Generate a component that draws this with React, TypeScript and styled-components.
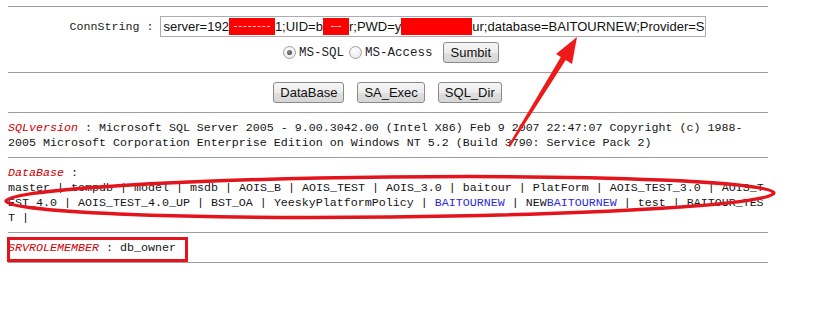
import React from "react";
import styled, { createGlobalStyle } from "styled-components";

const Global = createGlobalStyle`
  html, body { margin: 0; padding: 0; background: #ffffff; }
  body { font-family: "Liberation Mono", "Courier New", monospace; color: #111; }
`;

const Page = styled.div`
  position: relative;
  width: 819px;
  height: 310px;
  box-sizing: border-box;
  padding: 6px 0 0 8px;
  overflow: hidden;
`;

const Panel = styled.div`
  width: 760px;
  display: flex;
  flex-direction: column;
`;

const Rule = styled.div`
  height: 0;
  border-top: 1px solid #9d9d9d;
`;

const ConnSection = styled.div`
  display: flex;
  flex-direction: column;
  align-items: center;
  gap: 5px;
  padding: 9px 0 9px;
`;

const Row = styled.div<{ $shift?: number }>`
  display: flex;
  align-items: center;
  justify-content: center;
  height: 21px;
  margin-left: ${(p) => p.$shift ?? 0}px;
`;

const Mono = styled.span`
  font-family: "Liberation Mono", "Courier New", monospace;
  font-size: 11.67px;
  color: #222;
  white-space: pre;
`;

const FakeInput = styled.div`
  width: 546px;
  height: 21px;
  margin-left: 7px;
  box-sizing: border-box;
  border: 1px solid #abadb3;
  padding: 0 2px;
  font-family: "Liberation Sans", Arial, sans-serif;
  font-size: 13px;
  line-height: 19px;
  color: #111;
  white-space: nowrap;
  overflow: hidden;
`;

const Redact = styled.span<{ $w: number; $dash: number }>`
  position: relative;
  display: inline-block;
  width: ${(p) => p.$w}px;
  height: 17px;
  vertical-align: -4px;
  background: #fe0000;
  &::after {
    content: "";
    position: absolute;
    left: 50%;
    top: 8px;
    width: ${(p) => p.$dash}px;
    margin-left: -${(p) => p.$dash / 2}px;
    border-top: 1px dashed #ffd0d0;
  }
`;

const Radio = styled.span<{ $checked?: boolean }>`
  position: relative;
  display: inline-block;
  width: 13px;
  height: 13px;
  box-sizing: border-box;
  border-radius: 50%;
  border: 1px solid #a0a0a0;
  background: radial-gradient(circle at 40% 35%, #ffffff, #e2e2e2);
  margin-right: 3px;
  &::after {
    content: "";
    display: ${(p) => (p.$checked ? "block" : "none")};
    position: absolute;
    left: 3px;
    top: 3px;
    width: 5px;
    height: 5px;
    border-radius: 50%;
    background: radial-gradient(circle at 40% 35%, #8a8a8a, #3c3c3c);
  }
`;

const RadioLabel = styled(Mono)<{ $gap: number }>`
  font-size: 12.5px;
  margin-right: ${(p) => p.$gap}px;
`;

const Button = styled.button<{ $pad?: number }>`
  height: 21px;
  padding: 0 ${(p) => p.$pad ?? 6}px;
  box-sizing: border-box;
  border: 1px solid #8a8a8a;
  border-radius: 3px;
  background: linear-gradient(#f6f6f6, #ececec 50%, #dfdfdf 51%, #d6d6d6);
  font-family: "Liberation Sans", Arial, sans-serif;
  font-size: 13px;
  line-height: 19px;
  color: #111;
  cursor: default;
`;

const ButtonRow = styled.div`
  display: flex;
  justify-content: center;
  gap: 13px;
  padding: 9px 0 9px;
  margin-left: -1px;
`;

const Info = styled.div<{ $breakAll?: boolean }>`
  padding: 8px 0 6px;
  font-family: "Liberation Mono", "Courier New", monospace;
  font-size: 11.67px;
  line-height: 15px;
  color: #151515;
  word-break: ${(p) => (p.$breakAll ? "break-all" : "normal")};
`;

const Key = styled.span`
  color: #d00000;
  font-style: italic;
`;

const Hit = styled.span`
  color: #2b2bd6;
`;

const Overlay = styled.svg`
  position: absolute;
  left: 0;
  top: 0;
  pointer-events: none;
`;

const dbs = [
  "master",
  "tempdb",
  "model",
  "msdb",
  "AOIS_B",
  "AOIS_TEST",
  "AOIS_3.0",
  "baitour",
  "PlatForm",
  "AOIS_TEST_3.0",
  "AOIS_TEST_4.0",
  "AOIS_TEST_4.0_UP",
  "BST_OA",
  "YeeskyPlatformPolicy",
  "BAITOURNEW",
  "NEWBAITOURNEW",
  "test",
  "BAITOUR_TEST",
];

function renderDb(name: string) {
  const idx = name.indexOf("BAITOURNEW");
  if (idx < 0) return name;
  return (
    <>
      {name.slice(0, idx)}
      <Hit>BAITOURNEW</Hit>
      {name.slice(idx + 10)}
    </>
  );
}

export default function App() {
  return (
    <>
      <Global />
      <Page>
        <Panel>
          <Rule />
          <ConnSection>
            <Row>
              <Mono>ConnString :</Mono>
              <FakeInput>
                server=192
                <Redact $w={46} $dash={36} />
                1;UID=b
                <Redact $w={26} $dash={10} />
                r;PWD=y
                <Redact $w={71} $dash={0} />
                ur;database=BAITOURNEW;Provider=SQLOLEDB
              </FakeInput>
            </Row>
            <Row $shift={6}>
              <Radio $checked />
              <RadioLabel $gap={5}>MS-SQL</RadioLabel>
              <Radio />
              <RadioLabel $gap={10}>MS-Access</RadioLabel>
              <Button $pad={7}>Sumbit</Button>
            </Row>
          </ConnSection>
          <Rule />
          <ButtonRow>
            <Button>DataBase</Button>
            <Button>SA_Exec</Button>
            <Button>SQL_Dir</Button>
          </ButtonRow>
          <Rule />
          <Info>
            <Key>SQLversion</Key> : Microsoft SQL Server 2005 - 9.00.3042.00
            (Intel X86) Feb 9 2007 22:47:07 Copyright (c) 1988-
            <wbr />
            2005 Microsoft Corporation Enterprise Edition on Windows NT 5.2
            (Build 3790: Service Pack 2)
          </Info>
          <Rule />
          <Info $breakAll>
            <Key>DataBase</Key> :<br />
            {dbs.map((d, i) => (
              <React.Fragment key={i}>
                {renderDb(d)}
                {" | "}
              </React.Fragment>
            ))}
          </Info>
          <Rule />
          <Info>
            <Key>SRVROLEMEMBER</Key> : db_owner
          </Info>
          <Rule />
        </Panel>
        <Overlay width="819" height="310" viewBox="0 0 819 310">
          <ellipse
            cx="390"
            cy="197"
            rx="384"
            ry="20"
            transform="rotate(-0.6 390 197)"
            fill="none"
            stroke="#e3141c"
            strokeWidth="3.5"
          />
          <rect
            x="8.5"
            y="238.5"
            width="178"
            height="22"
            fill="none"
            stroke="#e3141c"
            strokeWidth="3"
          />
          <polygon points="508,146 510,147 567,58 562,55" fill="#ee1a1a" />
          <polygon points="577,37 556,54 572,64" fill="#ee1a1a" />
        </Overlay>
      </Page>
    </>
  );
}
